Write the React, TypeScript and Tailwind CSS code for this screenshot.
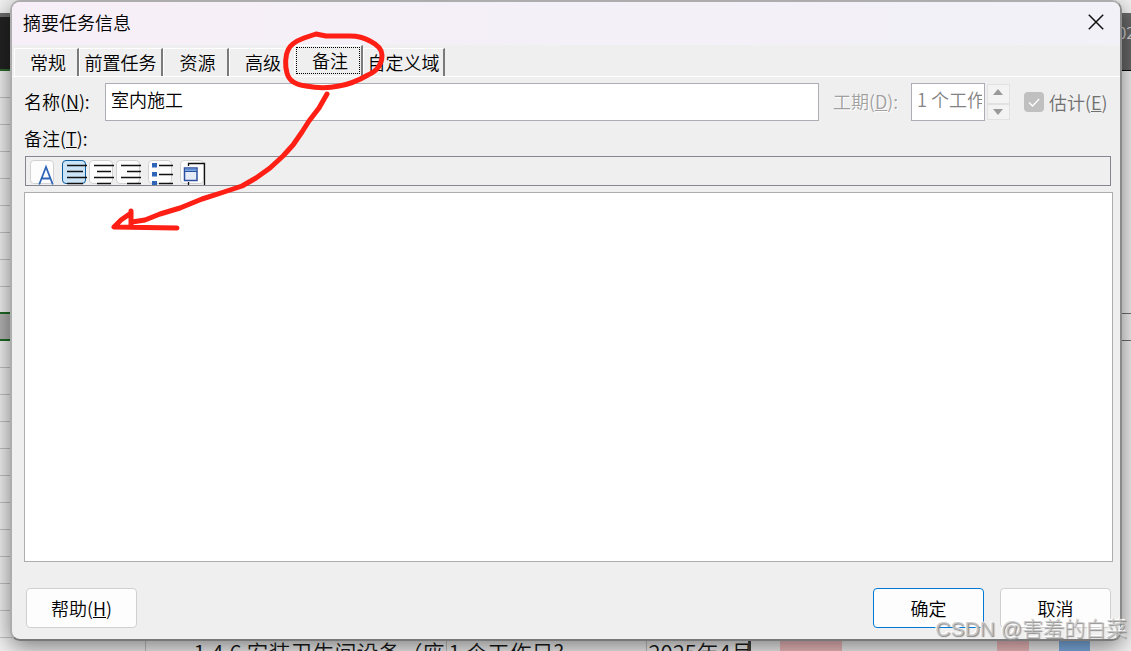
import type { ReactNode } from 'react';
import { useState } from 'react';
import clsx from 'clsx';

type Tab = { id: string; label: string; className: string };

const TABS: Tab[] = [
  { id: 'general', label: '常规', className: 'w-[65px] pl-1' },
  { id: 'predecessors', label: '前置任务', className: 'w-[84px]' },
  { id: 'resources', label: '资源', className: 'w-[66px] pl-1' },
  { id: 'advanced', label: '高级', className: 'w-[65px] pl-1 border-r-transparent' },
  { id: 'notes', label: '备注', className: 'w-[69px]' },
  { id: 'custom', label: '自定义域', className: 'w-[82px]' },
];

const ROWS = Array.from({ length: 22 }, (_, i) => i);
const SELECTED_ROW = 9;
const LAST_ROW = 21;

// full lines and the shorter ones between them, as path data
const ALIGN_LEFT = 'M4 4.5H24M4 10.5H20M4 16.5H24M4 22.5H20';
const ALIGN_CENTER = 'M4 4.5H24M7 10.5H21M4 16.5H24M7 22.5H21';
const ALIGN_RIGHT = 'M4 4.5H24M10 10.5H24M4 16.5H24M10 22.5H24';

function AlignIcon({ d }: { d: string }) {
  return (
    <svg className="h-6 w-6 shrink-0 overflow-visible" viewBox="0 0 24 24" aria-hidden="true">
      <path d={d} stroke="#111" strokeWidth="1.4" />
    </svg>
  );
}

function ToolButton({ label, active, className, children }: { label: string; active?: boolean; className?: string; children: ReactNode }) {
  return (
    <button
      type="button"
      aria-label={label}
      aria-pressed={active}
      className={clsx(
        'flex h-6 w-6 shrink-0 items-start justify-start rounded border',
        active ? 'border-[#0a5a9c] bg-[#cce4f7]' : 'border-[#d2d2d2] bg-[#fdfdfd]',
        className,
      )}
    >
      {children}
    </button>
  );
}

function Toolbar() {
  return (
    <div role="toolbar" className="mr-[2px] ml-px mt-1 flex h-[30px] items-start overflow-hidden border border-[#868690] px-1 pt-[3px]">
      <ToolButton label="字体">
        <svg className="h-6 w-6 shrink-0 overflow-visible" viewBox="0 0 24 24" aria-hidden="true">
          <path d="M8.2 23.5L15 6L21.8 23.5M10.500 17.500H19.500" fill="none" stroke="#2f66b8" strokeWidth="1.800" />
        </svg>
      </ToolButton>
      <ToolButton label="左对齐" active className="ml-2">
        <AlignIcon d={ALIGN_LEFT} />
      </ToolButton>
      <ToolButton label="居中" className="ml-[3px]">
        <AlignIcon d={ALIGN_CENTER} />
      </ToolButton>
      <ToolButton label="右对齐" className="ml-[3px]">
        <AlignIcon d={ALIGN_RIGHT} />
      </ToolButton>
      <ToolButton label="项目符号列表" className="ml-2">
        <svg className="h-6 w-6 shrink-0 overflow-visible" viewBox="0 0 24 24" aria-hidden="true">
          <path d="M3 2h5v4.500H3zM3 11h5v4.500H3zM3 20h5v4.500H3z" fill="#2f66b8" />
          <path d="M10 4.500H24M10 13.500H24M10 22.500H24" stroke="#111" strokeWidth="1.400" />
        </svg>
      </ToolButton>
      <ToolButton label="插入对象" className="ml-2">
        <svg className="h-6 w-6 shrink-0 overflow-visible" viewBox="0 0 24 24" aria-hidden="true">
          <path d="M7.500 5V2.500H23.500V24M7.500 21V24" fill="none" stroke="#111" strokeWidth="1.300" />
          <rect x="3.500" y="7" width="12.500" height="12.500" fill="#e6ebf8" stroke="#2c4f9f" strokeWidth="1.500" />
          <path d="M4.300 7.800h11v2h-11z" fill="#5b93d6" />
          <path d="M3 10.500H16" stroke="#2c4f9f" />
        </svg>
      </ToolButton>
    </div>
  );
}

function ProjectBackground() {
  return (
    <div className="flex h-full flex-col bg-[#f3f3f3]">
      <div className="h-[13px] shrink-0 bg-[#f3f3f3]" />
      <div className="flex h-[58px] shrink-0 border-t-4 border-[#6b6b6b]">
        <div className="w-[750px] border-b-2 border-[#2c6b2c] bg-[#232323]" />
        <div className="flex flex-1 justify-end overflow-hidden border-b border-black bg-[#686868] pt-0.5 text-[16px] text-[#d8d8d8]">
          <span className="-mr-1">202</span>
        </div>
      </div>
      <div className="-mt-px flex flex-1 overflow-hidden">
        <table className="h-max w-[748px] shrink-0 table-fixed border-collapse text-[22px] leading-[26px] whitespace-nowrap text-[#1a1a1a]">
          <colgroup>
            <col className="w-[145px]" />
            <col className="w-[301px]" />
            <col className="w-[200px]" />
            <col />
          </colgroup>
          <tbody>
            {ROWS.map((i) => (
              <tr
                key={i}
                className={clsx(
                  'h-[27px]',
                  i > 0 && 'border-t',
                  i === SELECTED_ROW && 'border-t-2 border-[#1f6b25] bg-[#b5b5b5]',
                  i === SELECTED_ROW + 1 && 'border-t-2 border-[#1f6b25]',
                  i !== SELECTED_ROW && i !== SELECTED_ROW + 1 && 'border-[#c4c4c4]',
                )}
              >
                <td className="border-r border-[#c4c4c4] p-0" />
                <td className="overflow-hidden border-r border-[#c4c4c4] p-0 pl-[48px]">{i === LAST_ROW && '1.4.6 安装卫生间设备（座'}</td>
                <td className="border-r border-[#c4c4c4] p-0 pl-[2px]">{i === LAST_ROW && '1 个工作日?'}</td>
                <td className="overflow-hidden p-0 pl-[2px]">{i === LAST_ROW && '2025年4月'}</td>
              </tr>
            ))}
          </tbody>
        </table>
        <div className="w-[3px] shrink-0 bg-[#444]" />
        <div className="flex flex-1 flex-col">
          <div className="h-[243px] shrink-0" />
          <div className="h-7 shrink-0 border-y border-[#6f6f6f]" />
          <div className="flex flex-1 items-end pl-[29px]">
            <div className="h-2.5 w-[62px] bg-[#f3bfc1]" />
            <div className="ml-[155px] h-2.5 w-8 bg-[#f3bfc1]" />
            <div className="ml-[30px] h-2.5 w-[31px] bg-[#7fb0e6]" />
          </div>
        </div>
      </div>
    </div>
  );
}

function TabStrip({ active, onSelect }: { active: string; onSelect: (id: string) => void }) {
  return (
    <div role="tablist" className="flex h-[31px] shrink-0 items-end pl-[2px]">
      {TABS.map((tab) => {
        const selected = tab.id === active;
        return (
          <button
            key={tab.id}
            type="button"
            role="tab"
            aria-selected={selected}
            onClick={() => onSelect(tab.id)}
            className={clsx(
              'flex shrink-0 border-t border-r-2 border-l border-white whitespace-nowrap',
              tab.id !== 'advanced' && 'border-r-[#7a7a7a]',
              tab.className,
              selected ? 'h-[31px] p-px' : 'h-7 items-start justify-center',
            )}
          >
            {selected ? (
              <span className="flex h-[27px] w-full items-center justify-center border border-dotted border-black pb-0.5 pl-1">
                {tab.label}
              </span>
            ) : (
              tab.label
            )}
          </button>
        );
      })}
    </div>
  );
}

function TaskDialog() {
  const [tab, setTab] = useState('notes');

  return (
    <div
      role="dialog"
      aria-labelledby="dialog-title"
      className="absolute top-0 right-[9px] bottom-[10px] left-[10px] flex flex-col overflow-hidden rounded-[10px] border-2 border-[#adadad] border-r-[#8a8a8a] border-b-[#787878] bg-[#efefef] shadow-[0_6px_24px_rgba(0,0,0,0.5)]"
    >
      <div className="flex h-[43px] shrink-0 items-center justify-between bg-linear-to-r from-[#f7eff7] to-[#f1f1f7] pr-4 pb-1 pl-[11px]">
        <h1 id="dialog-title">摘要任务信息</h1>
        <button type="button" aria-label="关闭">
          <svg className="h-4 w-4" viewBox="0 0 16 16" aria-hidden="true">
            <path d="M0.800 0.800L15.200 15.200M15.200 0.800L0.800 15.200" stroke="#111" strokeWidth="1.500" />
          </svg>
        </button>
      </div>

      <TabStrip active={tab} onSelect={setTab} />

      <div role="tabpanel" className="flex min-h-0 flex-1 flex-col border-t border-white pr-[7px] pb-[11px] pl-3">
        <div className="mt-1.5 flex h-[38px] shrink-0 items-center">
          <label htmlFor="task-name" className="w-[81px] shrink-0 pb-0.5">
            名称(<u>N</u>):
          </label>
          <input id="task-name" defaultValue="室内施工" className="h-full min-w-0 flex-1 border border-[#adadb5] bg-white px-[5px] pb-1.5" />
          <label htmlFor="duration" className="ml-3.5 w-[78px] shrink-0 pb-0.5 text-[#a0a0a0] [text-shadow:1px_1px_0_#fff]">
            工期(<u>D</u>):
          </label>
          <div className="flex h-full w-[74px] shrink-0 border border-[#adadb5] bg-white pr-[2px]">
            <input id="duration" disabled defaultValue="1 个工作日?" className="h-full w-full min-w-0 pb-1.5 pl-[5px] text-[#838383]" />
          </div>
          <div className="ml-[2px] flex h-9 w-[23px] shrink-0 flex-col">
            <button type="button" disabled aria-label="增加" className="flex flex-1 items-center justify-center border border-[#e2e2e2] bg-[#f3f3f3] pr-0.5 pb-1">
              <svg className="h-1.5 w-2.5" viewBox="0 0 10 6" aria-hidden="true">
                <path d="M5 0L10 6H0z" fill="#9a9a9a" />
              </svg>
            </button>
            <button type="button" disabled aria-label="减少" className="flex flex-1 items-center justify-center border border-[#e2e2e2] bg-[#f3f3f3] pr-0.5">
              <svg className="h-1.5 w-2.5" viewBox="0 0 10 6" aria-hidden="true">
                <path d="M5 6L10 0H0z" fill="#9a9a9a" />
              </svg>
            </button>
          </div>
          <label className="ml-3.5 flex w-[89px] shrink-0 items-center gap-[5px] text-[#707070]">
            <span className="grid h-5 w-5 shrink-0">
              <input type="checkbox" disabled defaultChecked className="col-start-1 row-start-1 h-5 w-5 appearance-none rounded bg-[#c0c0c0]" />
              <svg className="pointer-events-none col-start-1 row-start-1 h-5 w-5" viewBox="0 0 20 20" aria-hidden="true">
                <path d="M5 10.500L8.500 14L15.200 7" fill="none" stroke="#fff" strokeWidth="1.300" />
              </svg>
            </span>
            <span>
              估计(<u>E</u>)
            </span>
          </label>
        </div>

        <label htmlFor="notes" className="mt-1 leading-[27px]">
          备注(<u>T</u>):
        </label>
        <Toolbar />
        <textarea id="notes" className="mt-1.5 min-h-0 flex-1 resize-none border border-[#adadad] bg-white p-1" />

        <div className="mt-[26px] flex h-10 shrink-0 gap-4 px-[2px]">
          <button type="button" className="w-[111px] rounded border border-[#d0d0d0] bg-[#fdfdfd]">
            帮助(<u>H</u>)
          </button>
          <button type="button" className="ml-auto w-[111px] rounded border border-[#0078d4] bg-[#fdfdfd]">
            确定
          </button>
          <button type="button" className="w-[111px] rounded border border-[#d0d0d0] bg-[#fdfdfd]">
            取消
          </button>
        </div>
      </div>
    </div>
  );
}

// Hand-drawn marker: a ring round the notes tab and an arrow to the text area.
function Annotation() {
  return (
    <svg
      className="pointer-events-none absolute top-0 left-0 h-[240px] w-[400px]"
      viewBox="0 0 400 240"
      fill="none"
      stroke="#ff1f14"
      strokeWidth="5"
      strokeLinecap="round"
      strokeLinejoin="round"
      aria-hidden="true"
    >
      <path d="M326 36L316 34L304 38C296 41 290 45 288 50C285 56 285 66 287 73C289 81 297 85 306 86C316 88 330 88 339 86C352 84 361 79 368 75C377 71 382 64 382 55C382 48 376 44 370 41C363 37 357 36 350 36L326 36" />
      <path d="M327 94L319 108L309 121L302 132L293 145L283 156L270 168L256 178L242 186L224 192L202 199L180 208L160 214L145 220L132 222M131 211L131 225M131 213L121 220L114 227L177 228" />
    </svg>
  );
}

export default function App() {
  return (
    <div className="relative h-screen overflow-hidden font-['Noto_Sans_CJK_SC',sans-serif] text-[18px] leading-[26px] font-[350] text-black">
      <ProjectBackground />
      <TaskDialog />
      <Annotation />
      <div className="pointer-events-none absolute right-1 bottom-1.5 font-['Liberation_Sans','Noto_Sans_CJK_SC',sans-serif] text-[21px] leading-[32px] font-light whitespace-nowrap text-[#c4c4c4]/80 [text-shadow:1px_1px_1px_#888,-1px_-1px_0_#fff]">
        CSDN @害羞的白菜
      </div>
    </div>
  );
}
